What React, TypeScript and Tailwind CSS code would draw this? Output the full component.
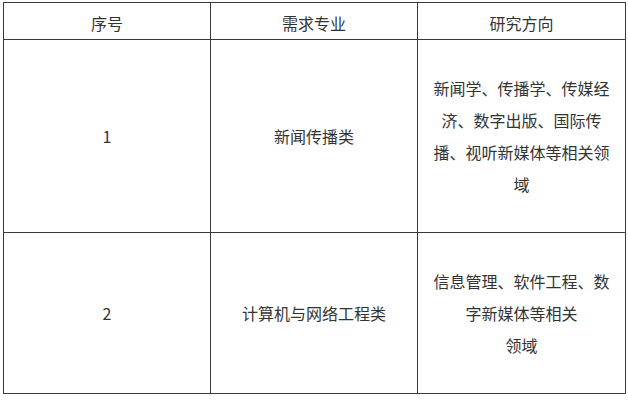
const rows = [
  {
    no: "1",
    major: "新闻传播类",
    lines: ["新闻学、传播学、传媒经", "济、数字出版、国际传", "播、视听新媒体等相关领", "域"],
    h: "h-[193px]",
  },
  {
    no: "2",
    major: "计算机与网络工程类",
    lines: ["信息管理、软件工程、数", "字新媒体等相关", "领域"],
    h: "h-[161px]",
  },
];

export default function App() {
  return (
    <div
      className="w-[628px] h-[401px] bg-white pl-[3px] pt-[2px] text-[#333] text-[16px]"
      style={{ fontFamily: '"Noto Sans CJK SC", "Microsoft YaHei", sans-serif' }}
    >
      <table className="table-fixed border-collapse w-[622px]">
        <colgroup>
          <col className="w-[207px]" />
          <col className="w-[207px]" />
          <col className="w-[208px]" />
        </colgroup>
        <thead>
          <tr className="h-[37px]">
            <th className="border border-[#3a3a3a] font-normal text-center pt-[3px]">序号</th>
            <th className="border border-[#3a3a3a] font-normal text-center pt-[3px]">需求专业</th>
            <th className="border border-[#3a3a3a] font-normal text-center pt-[3px]">研究方向</th>
          </tr>
        </thead>
        <tbody>
          {rows.map((r) => (
            <tr key={r.no} className={r.h}>
              <td className="border border-[#3a3a3a] text-center align-middle">{r.no}</td>
              <td className="border border-[#3a3a3a] text-center align-middle">{r.major}</td>
              <td className="border border-[#3a3a3a] text-center align-middle px-2 leading-[32px]">
                {r.lines.map((l, i) => (
                  <div key={i} className="whitespace-nowrap">
                    {l}
                  </div>
                ))}
              </td>
            </tr>
          ))}
        </tbody>
      </table>
    </div>
  );
}
